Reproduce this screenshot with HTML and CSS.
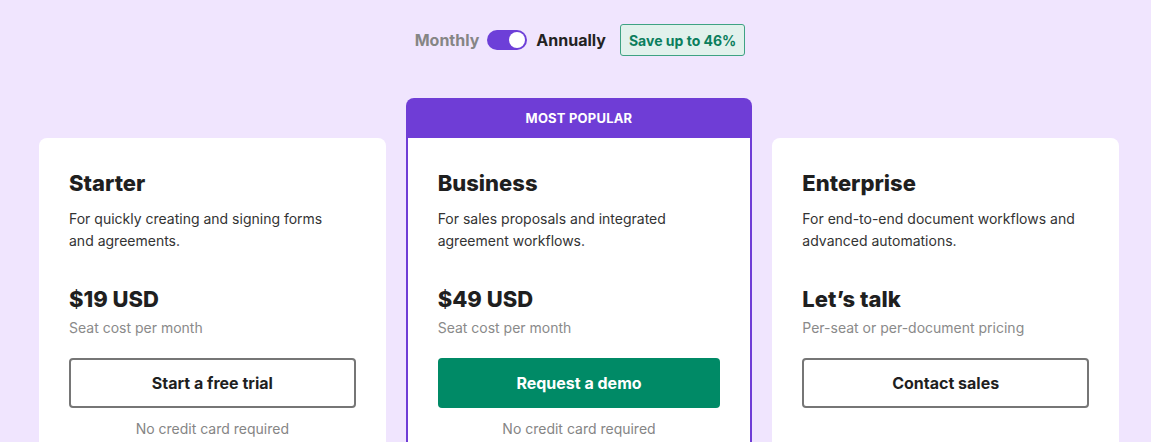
FILE: index.html
```html
<!DOCTYPE html>
<html lang="en">
<head>
<meta charset="utf-8">
<title>Pricing</title>
<link rel="stylesheet" href="styles.css">
</head>
<body>
<main class="page">
  <div class="billing">
    <span class="billing-label muted">Monthly</span>
    <span class="switch" role="switch" aria-checked="true"><span class="knob"></span></span>
    <span class="billing-label">Annually</span>
    <span class="save-badge">Save up to 46%</span>
  </div>

  <div class="plans">
    <section class="plan">
      <h2 class="plan-name">Starter</h2>
      <p class="plan-desc">For quickly creating and signing forms and agreements.</p>
      <div class="plan-price">$19 USD</div>
      <div class="plan-unit">Seat cost per month</div>
      <a class="btn btn-outline" href="#">Start a free trial</a>
      <div class="plan-note">No credit card required</div>
    </section>

    <section class="plan plan-featured">
      <div class="plan-flag">MOST POPULAR</div>
      <div class="plan-body">
        <h2 class="plan-name">Business</h2>
        <p class="plan-desc">For sales proposals and integrated agreement workflows.</p>
        <div class="plan-price">$49 USD</div>
        <div class="plan-unit">Seat cost per month</div>
        <a class="btn btn-primary" href="#">Request a demo</a>
        <div class="plan-note">No credit card required</div>
      </div>
    </section>

    <section class="plan">
      <h2 class="plan-name">Enterprise</h2>
      <p class="plan-desc">For end-to-end document workflows and advanced automations.</p>
      <div class="plan-price">Let’s talk</div>
      <div class="plan-unit">Per-seat or per-document pricing</div>
      <a class="btn btn-outline" href="#">Contact sales</a>
    </section>
  </div>
</main>
</body>
</html>
```
FILE: styles.css
```css
* { box-sizing: border-box; }

html, body {
  margin: 0;
  height: 100%;
  overflow: hidden;
}

body {
  background: #f0e5fe;
  font-family: Inter, "Noto Sans", "Liberation Sans", sans-serif;
  color: #222;
}

.page {
  width: 1080px;
  margin-left: 39px;
  padding-top: 24px;
}

.billing {
  display: flex;
  align-items: center;
  justify-content: center;
  height: 32px;
  padding-left: 2px;
}

.billing-label {
  font-size: 16px;
  font-weight: 700;
  color: #232323;
}

.billing-label.muted { color: #858585; }

.switch {
  position: relative;
  width: 40px;
  height: 20px;
  margin: 0 9px 0 8px;
  border-radius: 10px;
  background: #6d3fd8;
}

.knob {
  position: absolute;
  top: 2px;
  right: 2px;
  width: 16px;
  height: 16px;
  border-radius: 50%;
  background: #fff;
}

.save-badge {
  margin-left: 14px;
  height: 32px;
  padding: 0 8px;
  display: flex;
  align-items: center;
  font-size: 14px;
  font-weight: 700;
  color: #0b7e5d;
  background: #e1f1ec;
  border: 1px solid #3ea283;
  border-radius: 3px;
}

.plans {
  margin-top: 42px;
  display: grid;
  grid-template-columns: repeat(3, 1fr);
  gap: 20px;
  align-items: start;
}

.plan {
  margin-top: 40px;
  min-height: 400px;
  padding: 31px 30px 0;
  background: #fff;
  border-radius: 8px;
}

.plan-featured {
  margin-top: 0;
  padding: 0;
  border-radius: 8px 8px 0 0;
  background: #6f3dd6;
  overflow: hidden;
}

.plan-flag {
  height: 40px;
  display: flex;
  align-items: center;
  justify-content: center;
  color: #fff;
  font-size: 13px;
  font-weight: 700;
  letter-spacing: 0.2px;
}

.plan-body {
  margin: 0 2px;
  min-height: 400px;
  padding: 31px 30px 0;
  background: #fff;
}

.plan-name {
  margin: 0;
  font-size: 22px;
  line-height: 28px;
  font-weight: 800;
  color: #1f1f1f;
}

.plan-desc {
  margin: 11px 0 0;
  font-size: 14px;
  line-height: 22px;
  color: #333;
  max-width: 278px;
}

.plan-price {
  margin-top: 33px;
  font-size: 22px;
  line-height: 28px;
  font-weight: 800;
  color: #1f1f1f;
}

.plan-unit {
  margin-top: 5px;
  font-size: 14px;
  line-height: 20px;
  color: #8a8a8a;
}

.btn {
  margin-top: 20px;
  height: 50px;
  display: flex;
  align-items: center;
  justify-content: center;
  border-radius: 4px;
  font-size: 16px;
  font-weight: 700;
  text-decoration: none;
}

.btn-outline {
  border: 2px solid #767676;
  color: #1f1f1f;
  background: #fff;
}

.btn-primary {
  background: #008a66;
  color: #fff;
}

.plan-note {
  margin-top: 11px;
  text-align: center;
  font-size: 14px;
  line-height: 20px;
  color: #858585;
}
```
